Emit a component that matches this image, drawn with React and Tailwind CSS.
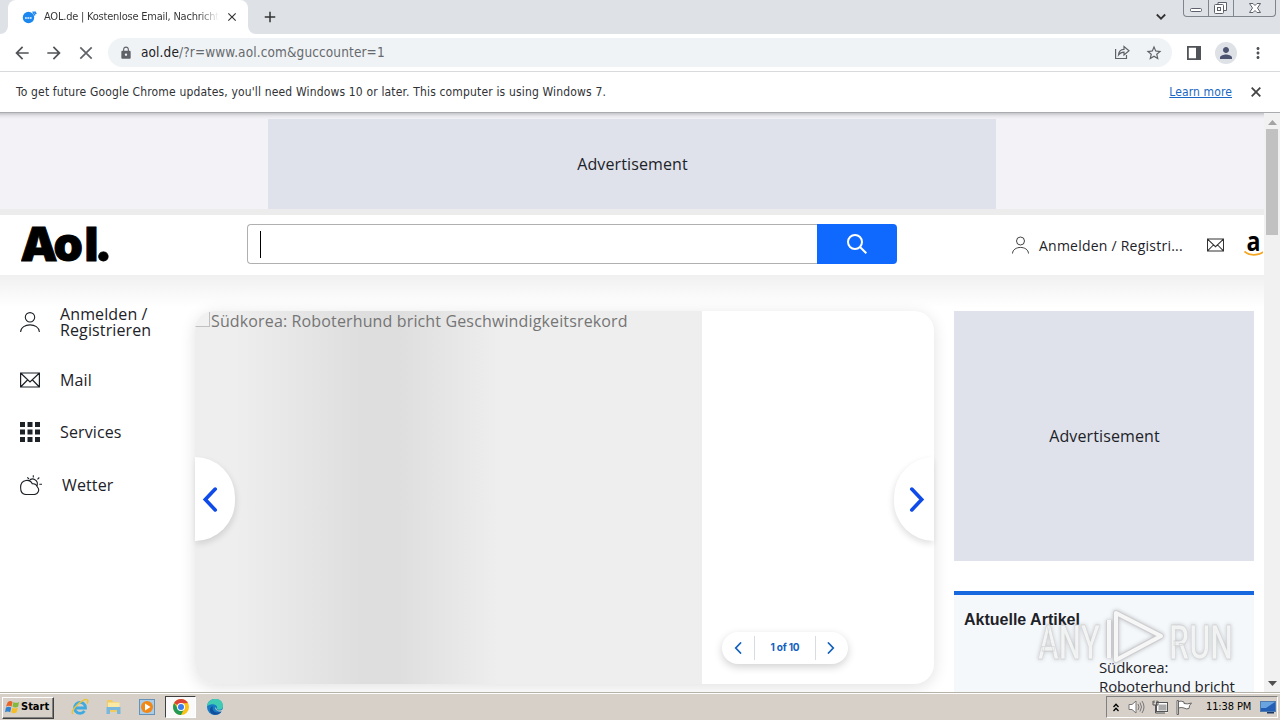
import React from "react";
import { MdArrowBack, MdArrowForward, MdClose, MdLock, MdStarBorder, MdMoreVert, MdPerson, MdAdd } from "react-icons/md";

const UserIcon = ({ className }) => (
  <svg className={className} viewBox="0 0 20 20" fill="none" stroke="currentColor" strokeWidth="1.1">
    <circle cx="10" cy="5.300" r="4.700" />
    <path d="M.6 20C1 10.500 19 10.500 19.400 20" />
  </svg>
);

const MailIcon = ({ className }) => (
  <svg className={className} viewBox="0 0 20 16" fill="none" stroke="currentColor" strokeWidth="1.200">
    <path d="M.6 1H19.400V15H.6ZM.6 1L10 10L19.400 1M.6 15L7.500 8M19.400 15L12.500 8" />
  </svg>
);

const GridIcon = ({ className }) => (
  <svg className={className} viewBox="0 0 20 20" fill="currentColor">
    <path d="M0 0h5v5H0zM7.500 0h5v5h-5zM15 0h5v5h-5zM0 7.500h5v5H0zM7.500 7.500h5v5h-5zM15 7.500h5v5h-5zM0 15h5v5H0zM7.500 15h5v5h-5zM15 15h5v5h-5z" />
  </svg>
);

const WeatherIcon = ({ className }) => (
  <svg className={className} viewBox="0 0 22 20" fill="none" stroke="currentColor" strokeWidth="1.1">
    <path d="M6 19.500H14A4.500 4.500 0 0 0 17.300 11.800A4.600 4.600 0 0 0 12.300 8.800A6 6 0 0 0 6 5.500C2.500 6 .6 9 .6 12.500C.6 16.500 2.500 19.500 6 19.500Z" />
    <path d="M9 6C10.500 4 13 3.500 15 4.800C17 6 17.800 8.500 17 11M13.300 .2V2.500M7.300 2.300L9 4M19.300 2.500L17.500 4.300M19.300 9.300H22" />
  </svg>
);

const Chevron = ({ className, left }) => (
  <svg className={className} viewBox="0 0 14 24" fill="none" stroke="currentColor" strokeWidth="3.500" strokeLinecap="round" strokeLinejoin="miter">
    <path d={left ? "M12 2L2.500 12L12 22" : "M2 2L11.500 12L2 22"} />
  </svg>
);

const TabStrip = () => (
  <div className="flex h-[34px] shrink-0 bg-[#dee1e6]">
    <div className="flex w-2 items-end bg-white">
      <div className="h-full w-full rounded-br-lg bg-[#dee1e6]" />
    </div>
    <div className="bg-[#dee1e6]">
      <div className="flex h-[34px] w-[240px] items-center rounded-t-lg bg-white pl-[14px]">
        <svg className="h-4 w-4 shrink-0" viewBox="0 0 16 16">
          <circle cx="6.500" cy="8.500" r="5.700" fill="#1d87f0" />
          <path d="M10.800 2.500L12.800 6.500M12.500 2.500L14.200 5" stroke="#1d87f0" strokeWidth="1.500" />
          <path d="M3 9H10" stroke="#b9dcff" strokeWidth="2" strokeDasharray="1.800 .6" />
        </svg>
        <div className="ml-[6px] w-[175px] overflow-hidden whitespace-nowrap bg-gradient-to-r from-[#333] from-88% to-transparent bg-clip-text font-['DejaVu_Sans_Condensed','DejaVu_Sans',sans-serif] text-[11px] tracking-[-0.22px] text-transparent">
          AOL.de | Kostenlose Email, Nachrichten
        </div>
        <MdClose className="ml-[6px] h-[14px] w-[14px] shrink-0 text-[#333]" />
      </div>
    </div>
    <div className="w-2 bg-white">
      <div className="h-full rounded-bl-lg bg-[#dee1e6]" />
    </div>
    <MdAdd className="ml-[5px] mt-[8px] h-[18px] w-[18px] text-[#333]" />
    <svg className="ml-auto mt-[13px] h-2 w-[10px]" viewBox="0 0 10 8" fill="none" stroke="#333" strokeWidth="1.800">
      <path d="M.8 1.500L5 5.700L9.200 1.500" />
    </svg>
    <div className="ml-[17px] mr-[4px] flex h-[17px] w-[93px] rounded-b border border-t-0 border-[#80848d]">
      <svg className="h-full w-full" viewBox="0 0 91 16" fill="none" stroke="#5d616b">
        <path d="M24.500 0V16M49.500 0V16" stroke="#80848d" />
        <rect x="6.500" y="8.500" width="11" height="3" rx="1" fill="#fff" />
        <path d="M34 4.500V2.500H42.500V10.500H40" fill="#fff" />
        <rect x="30.500" y="4.500" width="9" height="9" rx="1" fill="#fff" />
        <rect x="33.500" y="7.500" width="3" height="3" />
        <path d="M65.500 3.500H69L71 5.500L73 3.500H76.500L73.500 8L76.500 12.500H73L71 10.500L69 12.500H65.500L68.500 8Z" fill="#fff" />
      </svg>
    </div>
  </div>
);

const Toolbar = () => (
  <div className="flex h-[38px] shrink-0 items-center border-b border-[#d9dadc] bg-white">
    <MdArrowBack className="ml-3 h-5 w-5 text-[#505357]" />
    <MdArrowForward className="ml-3 h-5 w-5 text-[#505357]" />
    <svg className="ml-[15px] h-[14px] w-[14px]" viewBox="0 0 14 14" stroke="#5f6368" strokeWidth="1.700">
      <path d="M1.300 1.300L12.700 12.700M12.700 1.300L1.300 12.700" />
    </svg>
    <div className="ml-[15px] flex h-[29px] w-[1064px] items-center rounded-full bg-[#f0f3f5] pl-[11px] text-[#5f6368]">
      <MdLock className="h-[14px] w-[14px]" />
      <span className="ml-2 whitespace-nowrap font-['DejaVu_Sans_Condensed','DejaVu_Sans',sans-serif] text-[13.500px] tracking-[0.12px] text-[#666a6f]">
        <span className="text-[#202124]">aol.de</span>/?r=www.aol.com&amp;guccounter=1
      </span>
      <svg className="ml-auto mr-px h-[15px] w-4" viewBox="0 0 16 15" fill="none" stroke="#5f6368" strokeWidth="1.200">
        <path d="M1.600 4V13.500H12.500V10M4.500 10C4.800 6.500 7 4.500 10 4.400V1.500L15 5.800L10 10V7.200C7.500 7.200 6 8 4.500 10Z" />
      </svg>
      <MdStarBorder className="ml-[14px] mr-[9px] h-[18px] w-[18px]" />
    </div>
    <svg className="ml-[15px] h-[14px] w-[14px]" viewBox="0 0 14 14">
      <path d="M0 0H14V14H0ZM1.800 1.800V12.200H9V1.800Z" fill="#505357" fillRule="evenodd" />
    </svg>
    <div className="ml-[14px] flex h-[22px] w-[22px] items-center justify-center rounded-full bg-[#dee1e6]">
      <MdPerson className="h-[18px] w-[18px] text-[#4c5470]" />
    </div>
    <MdMoreVert className="ml-[12px] h-[18px] w-[18px] text-[#505357]" />
  </div>
);

const InfoBar = () => (
  <div className="flex h-[41px] shrink-0 items-center border-b border-[#a9abae] bg-white pl-4 font-['DejaVu_Sans_Condensed','DejaVu_Sans',sans-serif] text-[12px] text-[#303236]">
    <span className="whitespace-nowrap tracking-[0.16px]">
      To get future Google Chrome updates, you'll need Windows 10 or later. This computer is using Windows 7.
    </span>
    <a className="ml-auto whitespace-nowrap tracking-[0.12px] text-[#1967c2] underline">Learn more</a>
    <svg className="ml-[19px] mr-[19px] h-[10px] w-[10px]" viewBox="0 0 10 10" stroke="#444" strokeWidth="1.800">
      <path d="M.7 .7L9.300 9.300M9.300 .7L.7 9.300" />
    </svg>
  </div>
);

const AdBox = ({ className }) => (
  <div className={`flex items-center justify-center bg-[#dfe2ea] pl-px text-base tracking-[0.12px] text-[#1d2228] ${className}`}>
    Advertisement
  </div>
);

const Header = () => (
  <header className="flex h-[60px] shrink-0 items-center overflow-hidden bg-white">
    <div className="ml-[21px] w-[226px]">
      <svg className="block h-[44px] w-[92px]" viewBox="0 0 92 44">
        <text y="37.500" className="fill-black stroke-black text-[47px] font-black" strokeWidth=".8" style={{ fontFamily: "Inter, sans-serif" }}>
          <tspan x="-0.8">A</tspan>
          <tspan x="32.500">o</tspan>
          <tspan x="63.500">l</tspan>
          <tspan x="75.500" className="text-[58px]" style={{ fontFamily: "Lato, sans-serif" }}>.</tspan>
        </text>
      </svg>
    </div>
    <div className="-mt-[2px] flex h-10 w-[650px]">
      <div className="flex w-[570px] items-center rounded-l border border-r-0 border-[#b0b0b0] pl-3">
        <div className="h-[27px] w-px bg-black" />
      </div>
      <button className="flex w-20 items-center justify-center rounded-r bg-[#0f69ff]">
        <svg className="h-5 w-5" viewBox="0 0 20 20" fill="none" stroke="#fff" strokeWidth="2">
          <circle cx="8" cy="8" r="7" />
          <path d="M13 13L19.300 19.300" />
        </svg>
      </button>
    </div>
    <UserIcon className="ml-[115px] h-[18px] w-[17px] shrink-0 text-[#333]" />
    <span className="ml-[10px] w-[145px] shrink-0 whitespace-nowrap text-[14px] tracking-[0.23px] text-[#1d2228]">
      Anmelden / Registri...
    </span>
    <MailIcon className="ml-[23px] h-[14px] w-[17px] shrink-0 text-[#333]" />
    <svg className="ml-[20px] h-6 w-[19px] shrink-0" viewBox="0 0 19 24">
      <text x="2.500" y="17.500" className="fill-black font-['Open_Sans',sans-serif] text-[27px] font-bold" textLength="14" lengthAdjust="spacingAndGlyphs">a</text>
      <path d="M.5 18.500C6 23 14 23 20 18.500" fill="none" stroke="#f5a623" strokeWidth="1.700" />
    </svg>
  </header>
);

const SideNav = () => (
  <nav className="w-[195px] shrink-0 pl-5 pt-[30px] text-[16px] leading-4 tracking-[0.12px] text-[#1d2228]">
    <a className="flex h-[34px] items-center gap-5">
      <UserIcon className="h-5 w-5 shrink-0" />
      <span>Anmelden /<br />Registrieren</span>
    </a>
    <a className="mt-[31px] flex h-5 items-center gap-5">
      <MailIcon className="h-4 w-5" />
      <span>Mail</span>
    </a>
    <a className="mt-8 flex h-5 items-center gap-5">
      <GridIcon className="h-5 w-5" />
      <span>Services</span>
    </a>
    <a className="mt-[33px] flex h-5 items-center gap-5">
      <WeatherIcon className="h-5 w-[22px]" />
      <span>Wetter</span>
    </a>
  </nav>
);

const Carousel = () => (
  <section className="relative mt-9 h-[373px] w-[739px] shrink-0 rounded-[20px] bg-white shadow-[0_3px_16px_rgba(0,0,0,0.12)]">
    <div className="flex h-full overflow-hidden rounded-[20px]">
      <div className="flex w-[507px] bg-[linear-gradient(90deg,#eee_8%,#dedede_33%,#dedede_40%,#eee_60%)] text-[16px] leading-5 text-[#757575]">
        <div className="h-4 w-[15px] shrink-0 border-b border-r border-[#c0c0c0] bg-[#f1f1f1]" />
        <span className="whitespace-nowrap pl-px tracking-[0.14px]">Südkorea: Roboterhund bricht Geschwindigkeitsrekord</span>
      </div>
    </div>
    <button className="absolute left-0 top-[146px] flex h-[84px] w-10 items-center rounded-r-full bg-white pl-[7px] shadow-[1px_3px_6px_rgba(0,0,0,0.12)]">
      <Chevron left className="h-[25px] w-4 text-[#0f4be8]" />
    </button>
    <button className="absolute right-0 top-[146px] flex h-[84px] w-10 items-center rounded-l-full bg-white pl-[15px] shadow-[-1px_3px_6px_rgba(0,0,0,0.12)]">
      <Chevron className="h-[25px] w-4 text-[#0f4be8]" />
    </button>
    <div className="absolute bottom-5 left-[527px] flex h-8 w-[126px] items-center rounded-full bg-white text-[#1260bd] shadow-[0_3px_8px_rgba(0,0,0,0.18)]">
      <span className="-mt-px flex w-8 justify-center"><Chevron left className="h-[12px] w-[8px]" /></span>
      <span className="flex h-6 w-[62px] items-center justify-center whitespace-nowrap border-x border-[#d8dbe0] pb-px font-['Inter',sans-serif] text-[10px] font-bold tracking-[-0.2px]">
        1 of 10
      </span>
      <span className="-mt-px flex w-[30px] justify-center"><Chevron className="h-[12px] w-[8px]" /></span>
    </div>
  </section>
);

// translucent corner logo over the page
const Watermark = () => (
  <svg className="absolute left-[1034px] top-[606px] h-[64px] w-[204px] drop-shadow-[0_0_2px_rgba(80,80,80,0.4)]" viewBox="0 0 204 64">
    <g className="fill-white/70 stroke-[#c4c7ca]/60 font-['Roboto',sans-serif] text-[48px] font-medium" strokeWidth=".8">
      <text x="4" y="53" textLength="62" lengthAdjust="spacingAndGlyphs">ANY</text>
      <text x="135" y="53" textLength="64" lengthAdjust="spacingAndGlyphs">RUN</text>
    </g>
    <path d="M82 7L127 30L82 54ZM75 14V52" fill="none" stroke="#c7cacd" strokeOpacity=".65" strokeWidth="6" strokeLinejoin="round" />
    <path d="M82 7L127 30L82 54ZM75 14V52" fill="none" stroke="white" strokeOpacity=".85" strokeWidth="4" strokeLinejoin="round" />
  </svg>
);

const ScrollBar = () => (
  <div className="flex w-4 shrink-0 flex-col items-center bg-[#f1f1f1]">
    <svg className="mt-[7px] h-[5px] w-[9px]" viewBox="0 0 9 5"><path d="M0 5L4.500 0L9 5Z" fill="#a3a3a3" /></svg>
    <div className="mt-[4px] h-[106px] w-3 bg-[#c1c1c1]" />
    <svg className="mb-[6px] mt-auto h-[5px] w-[9px]" viewBox="0 0 9 5"><path d="M0 0L4.500 5L9 0Z" fill="#505050" /></svg>
  </div>
);

const Taskbar = () => (
  <footer className="flex h-[28px] shrink-0 items-center border-t border-[#b5b2a9] bg-[#d6d0c8] font-['DejaVu_Sans_Condensed','DejaVu_Sans',sans-serif] shadow-[inset_0_1px_0_#fff]">
    <button className="ml-[2px] mt-[2px] flex h-[22px] w-[52px] items-center border border-b-[#404040] border-l-white border-r-[#404040] border-t-white pl-[2px] shadow-[inset_-1px_-1px_0_#808080]">
      <svg className="h-[15px] w-[15px] shrink-0" viewBox="0 0 16 16">
        <path d="M3 2Q6 0 8 2L7 7Q4 5.500 1 7Z" fill="#e8632a" />
        <path d="M9 2Q12 4 15 2L14 7Q11 9 8 7Z" fill="#82b83b" />
        <path d="M1 8Q4 6.500 6.700 8L5.500 13Q3 11.500 0 13Z" fill="#3482cf" />
        <path d="M7.700 8Q10.500 10 13.700 8L12.500 13Q9.500 15 6.500 13Z" fill="#f5bd28" />
      </svg>
      <span className="ml-px text-[11px] font-bold text-black">Start</span>
    </button>
    <svg className="ml-[17px] h-[18px] w-[18px]" viewBox="0 0 18 18" fill="none">
      <path d="M4.500 10H14.500A5.500 5.500 0 1 0 13.500 13" stroke="#3eaae0" strokeWidth="2.800" />
      <path d="M2 16C-2 13 13 -1 16.500 2C17 2.800 17 4 16 5.500" stroke="#e9c33c" strokeWidth="1.500" />
    </svg>
    <svg className="ml-4 h-[17px] w-[17px]" viewBox="0 0 17 17">
      <path d="M2 2H7L8 4H14V14H2Z" fill="#f1cb61" />
      <path d="M3 4.500H14.500V10H3Z" fill="#f9e9a5" />
      <path d="M1.500 9H15.500V16H12V12H5V16H1.500Z" fill="#79b7dd" />
    </svg>
    <svg className="ml-[17px] h-[16px] w-[16px]" viewBox="0 0 16 16">
      <rect x=".5" y=".5" width="15" height="15" fill="#a9cce8" stroke="#6592b8" />
      <circle cx="8" cy="8" r="6" fill="#f08717" />
      <path d="M6 4.500L11.500 8L6 11.500Z" fill="#fff" />
    </svg>
    <div className="ml-[10px] mt-[1px] flex h-[22px] w-[31px] items-center justify-center border border-b-white border-l-[#404040] border-r-white border-t-[#404040] bg-[#fbfafa]">
      <svg className="h-4 w-4" viewBox="0 0 16 16">
        <circle cx="8" cy="8" r="8" fill="#fbc116" />
        <path d="M8 8L1.100 4A8 8 0 0 1 14.900 4L8 4.500Z" fill="#db4437" />
        <path d="M1.100 4A8 8 0 0 0 8 16L11 10L5 10Z" fill="#229b57" />
        <circle cx="8" cy="8" r="4" fill="#fff" />
        <circle cx="8" cy="8" r="3" fill="#3b7ded" />
      </svg>
    </div>
    <svg className="ml-[11px] h-4 w-4" viewBox="0 0 16 16">
      <circle cx="8" cy="8" r="8" fill="#167cc4" />
      <path d="M0 7C1 -2 16 -3 16 7C16 11 12 11.500 9.500 10C12 7 7 3 0 7Z" fill="#3fcab4" />
      <path d="M6 7C4 12 9 15 14.500 12.500C12 16 7 17 4 14C2 11 3 8 6 7Z" fill="#134f9c" />
      <path d="M9.500 10C10 12 14 12 16 10V12L14.500 12.500C11 13 8 11 8 8Z" fill="#d6d0c8" />
    </svg>
    <div className="ml-auto mr-[2px] mt-[1px] flex h-[22px] w-[172px] items-center border border-b-white border-l-[#808080] border-r-white border-t-[#808080]">
      <svg className="ml-[6px] h-[9px] w-[6px]" viewBox="0 0 6 9" fill="none" stroke="#000" strokeWidth="1.300"><path d="M.5 4L3 1.200L5.500 4M.5 8L3 5.200L5.500 8" /></svg>
      <svg className="ml-[9px] h-[14px] w-[17px]" viewBox="0 0 17 14" fill="none" stroke="#777" strokeWidth="1">
        <path d="M1 4.500H4L8 1V13L4 9.500H1Z" fill="#fff" />
        <path d="M10 4Q12 7 10 10M12 2.500Q15 7 12 11.500M14 1Q18 7 14 13" />
      </svg>
      <svg className="ml-[7px] h-[15px] w-[16px]" viewBox="0 0 16 15" fill="none" stroke="#555">
        <rect x="5.500" y="3.500" width="10" height="8" fill="#aaa" stroke="#fff" strokeWidth="2" />
        <rect x="4.500" y="2.500" width="11" height="9" />
        <path d="M1 1V5H6V1M3.500 5V13H13M2 .5V3M5 .5V3" />
      </svg>
      <svg className="ml-[8px] h-[15px] w-[16px]" viewBox="0 0 16 15" stroke="#666" fill="#fff">
        <path d="M1 .5H2.500V14.500H1ZM2.500 1.500Q5 .5 8 2V3.500Q11 4.500 15.500 3Q13 5 13 8.500Q10 9.500 8 8Q5 7 2.500 8Z" />
      </svg>
      <span className="ml-[14px] w-[46px] whitespace-nowrap text-[11px] tracking-[-0.13px] text-black">11:38 PM</span>
      <svg className="ml-[8px] h-[14px] w-[16px]" viewBox="0 0 16 14">
        <rect x=".5" y="1.500" width="15" height="10" fill="#245fb5" stroke="#517caf" />
        <path d="M1 2H15L6 8H1Z" fill="#69a3e0" />
        <path d="M7 12H14V13.500H7Z" fill="#193766" />
      </svg>
    </div>
  </footer>
);

export default function App() {
  return (
    <div className="relative flex h-[720px] w-[1280px] flex-col overflow-hidden bg-white font-['Open_Sans','Noto_Sans',sans-serif]">
      <TabStrip />
      <Toolbar />
      <InfoBar />
      <div className="flex h-[579px] shrink-0">
        <main className="flex w-[1264px] flex-col overflow-hidden">
          <div className="flex h-[102px] shrink-0 justify-center border-b-[6px] border-[#ececec] bg-[linear-gradient(180deg,#c4c5c8_0,#e6e6ea_3px,#f2f2f7_6px)] pt-[6px]">
            <AdBox className="h-[90px] w-[728px]" />
          </div>
          <Header />
          <div className="flex h-[417px] items-start bg-[linear-gradient(180deg,#f0f0f0_0,#fff_32px)]">
            <SideNav />
            <Carousel />
            <aside className="ml-5 mt-9 w-[300px]">
              <AdBox className="h-[250px]" />
              <div className="mt-[30px] h-[140px] border-t-4 border-[#1767de] bg-[#f5f8fb] px-[10px] pt-[9px] text-[#1d2228]">
                <h2 className="font-['Liberation_Sans',sans-serif] text-[16px] font-bold leading-8">Aktuelle Artikel</h2>
                <p className="ml-[135px] mt-[22px] whitespace-nowrap text-[15px] leading-[19px] tracking-[-0.12px]">Südkorea:<br />Roboterhund bricht</p>
              </div>
            </aside>
          </div>
        </main>
        <ScrollBar />
      </div>
      <Taskbar />
      <Watermark />
    </div>
  );
}
